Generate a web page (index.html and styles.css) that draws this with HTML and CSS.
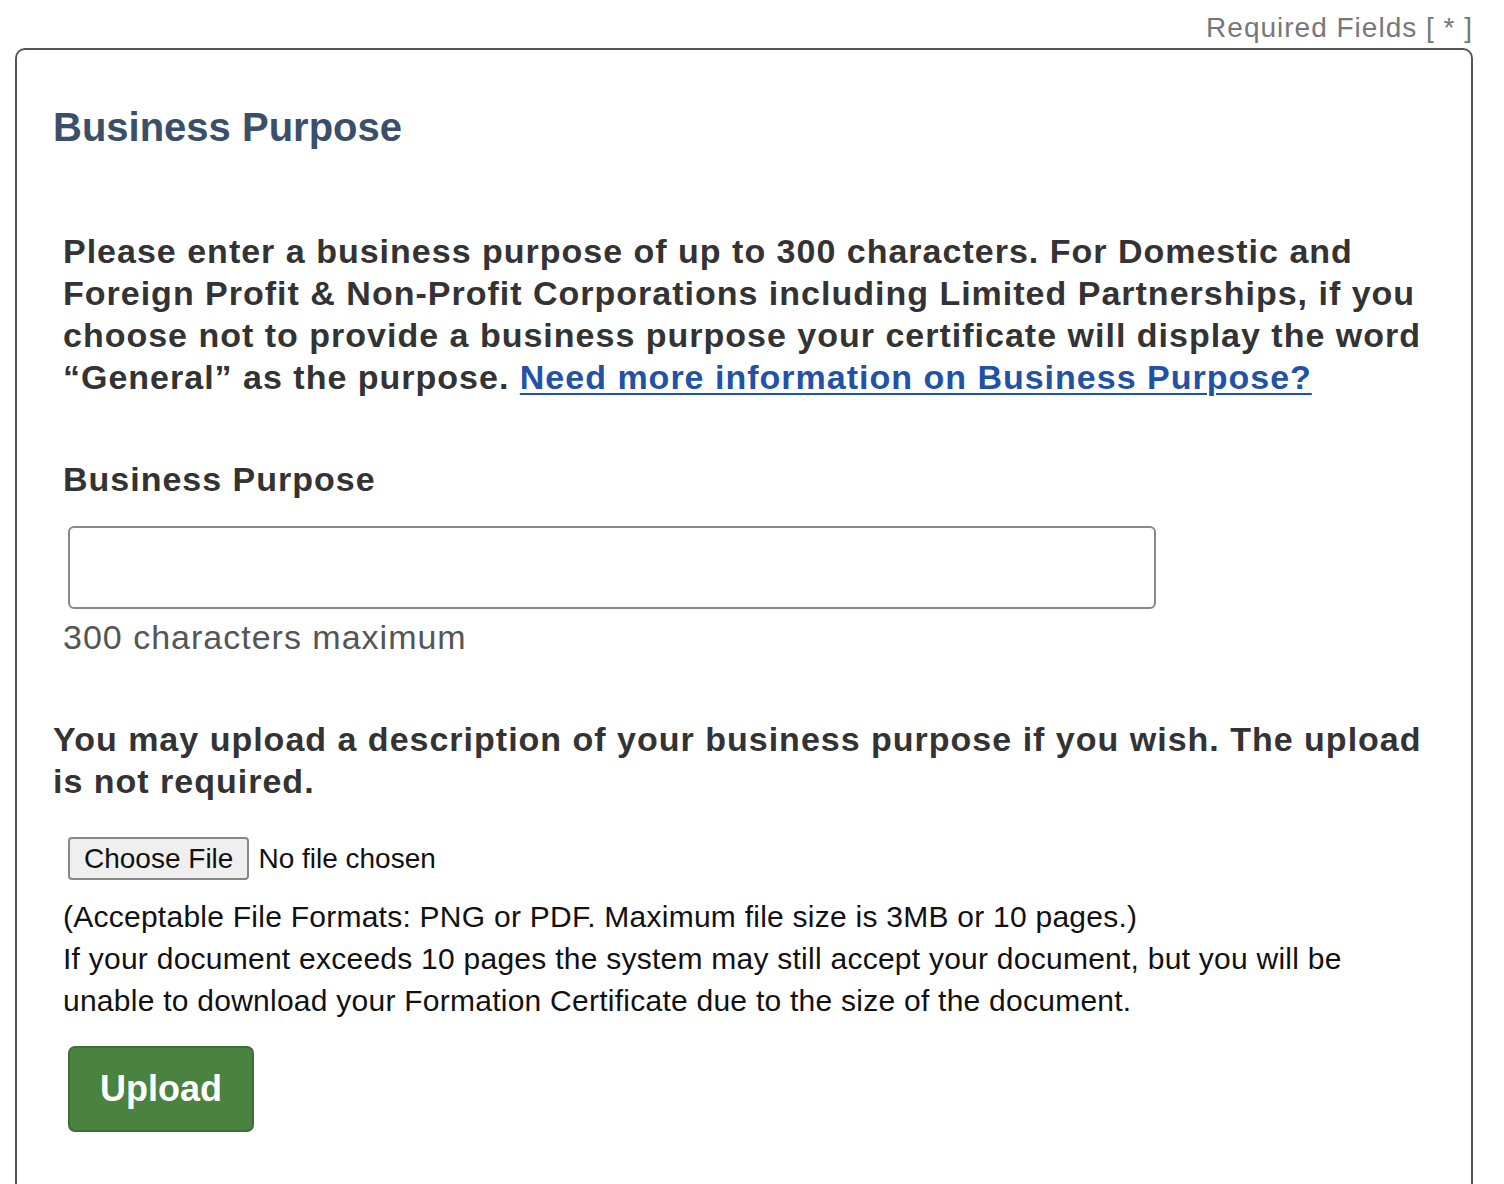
FILE: index.html
```html
<!DOCTYPE html>
<html lang="en">
<head>
<meta charset="utf-8">
<title>Business Purpose</title>
<link rel="stylesheet" href="styles.css">
</head>
<body>
<div class="required">Required Fields [ * ]</div>
<section class="panel">
  <h2 class="panel-title">Business Purpose</h2>
  <p class="intro">Please enter a business purpose of up to 300 characters. For Domestic and Foreign Profit &amp; Non-Profit Corporations including Limited Partnerships, if you choose not to provide a business purpose your certificate will display the word “General” as the purpose. <a href="#" class="info-link">Need more information on Business Purpose?</a></p>
  <label class="field-label" for="bp">Business Purpose</label>
  <input class="text-input" id="bp" type="text">
  <div class="hint">300 characters maximum</div>
  <p class="upload-intro">You may upload a description of your business purpose if you wish. The upload is not required.</p>
  <input class="file-input" type="file">
  <p class="formats">(Acceptable File Formats: PNG or PDF. Maximum file size is 3MB or 10 pages.)<br>If your document exceeds 10 pages the system may still accept your document, but you will be unable to download your Formation Certificate due to the size of the document.</p>
  <button class="upload-btn" type="button">Upload</button>
</section>
</body>
</html>
```
FILE: styles.css
```css
html, body {
  margin: 0;
  padding: 0;
  background: #fff;
}
body {
  font-family: "Liberation Sans", Arial, Helvetica, sans-serif;
  color: #333;
  height: 1184px;
  overflow: hidden;
}
.required {
  text-align: right;
  font-size: 28px;
  letter-spacing: 1px;
  line-height: 32px;
  color: #777;
  padding: 12px 31px 0 0;
  height: 36px;
}
.panel {
  margin: 0 31px 0 15px;
  border: 2px solid #555;
  border-bottom: none;
  border-radius: 10px 10px 0 0;
  padding: 55px 36px 60px 36px;
  min-height: 1200px;
  box-sizing: border-box;
}
.panel-title {
  margin: 0;
  font-size: 40px;
  line-height: 44px;
  color: #3a5068;
  font-weight: bold;
}
.intro {
  margin: 81px 0 0 10px;
  font-size: 34px;
  letter-spacing: 1px;
  line-height: 42px;
  font-weight: bold;
}
.info-link {
  color: #2152a8;
  text-decoration: underline;
  text-underline-offset: 4px;
  text-decoration-thickness: 2px;
}
.field-label {
  display: block;
  margin: 60px 0 0 10px;
  font-size: 34px;
  letter-spacing: 1px;
  line-height: 42px;
  font-weight: bold;
}
.text-input {
  display: block;
  margin: 26px 0 0 15px;
  width: 1088px;
  height: 83px;
  box-sizing: border-box;
  border: 2px solid #888;
  border-radius: 6px;
  font-size: 32px;
  padding: 0 12px;
  font-family: inherit;
}
.hint {
  margin: 7px 0 0 10px;
  font-size: 34px;
  letter-spacing: 1px;
  line-height: 42px;
  color: #555;
}
.upload-intro {
  margin: 60px 0 0 0;
  font-size: 34px;
  letter-spacing: 1px;
  line-height: 42px;
  font-weight: bold;
}
.file-input {
  display: block;
  margin: 35px 0 0 15px;
  font-family: "Liberation Sans", Arial, sans-serif;
  font-size: 28px;
  color: #111;
}
.file-input::file-selector-button {
  font-family: "Liberation Sans", Arial, sans-serif;
  font-size: 28px;
  color: #111;
  background: #efefef;
  border: 2px solid #888;
  border-radius: 4px;
  height: 43px;
  padding: 0 14px;
  margin-right: 9px;
}
.formats {
  margin: 16px 0 0 10px;
  font-size: 30px;
  letter-spacing: 0.25px;
  line-height: 42px;
  color: #111;
}
.upload-btn {
  display: block;
  margin: 24px 0 0 15px;
  width: 186px;
  height: 86px;
  background: #4a8240;
  border: 2px solid #3d6e35;
  border-radius: 7px;
  color: #fff;
  font-family: "Liberation Sans", Arial, sans-serif;
  font-size: 36px;
  font-weight: bold;
}
```
